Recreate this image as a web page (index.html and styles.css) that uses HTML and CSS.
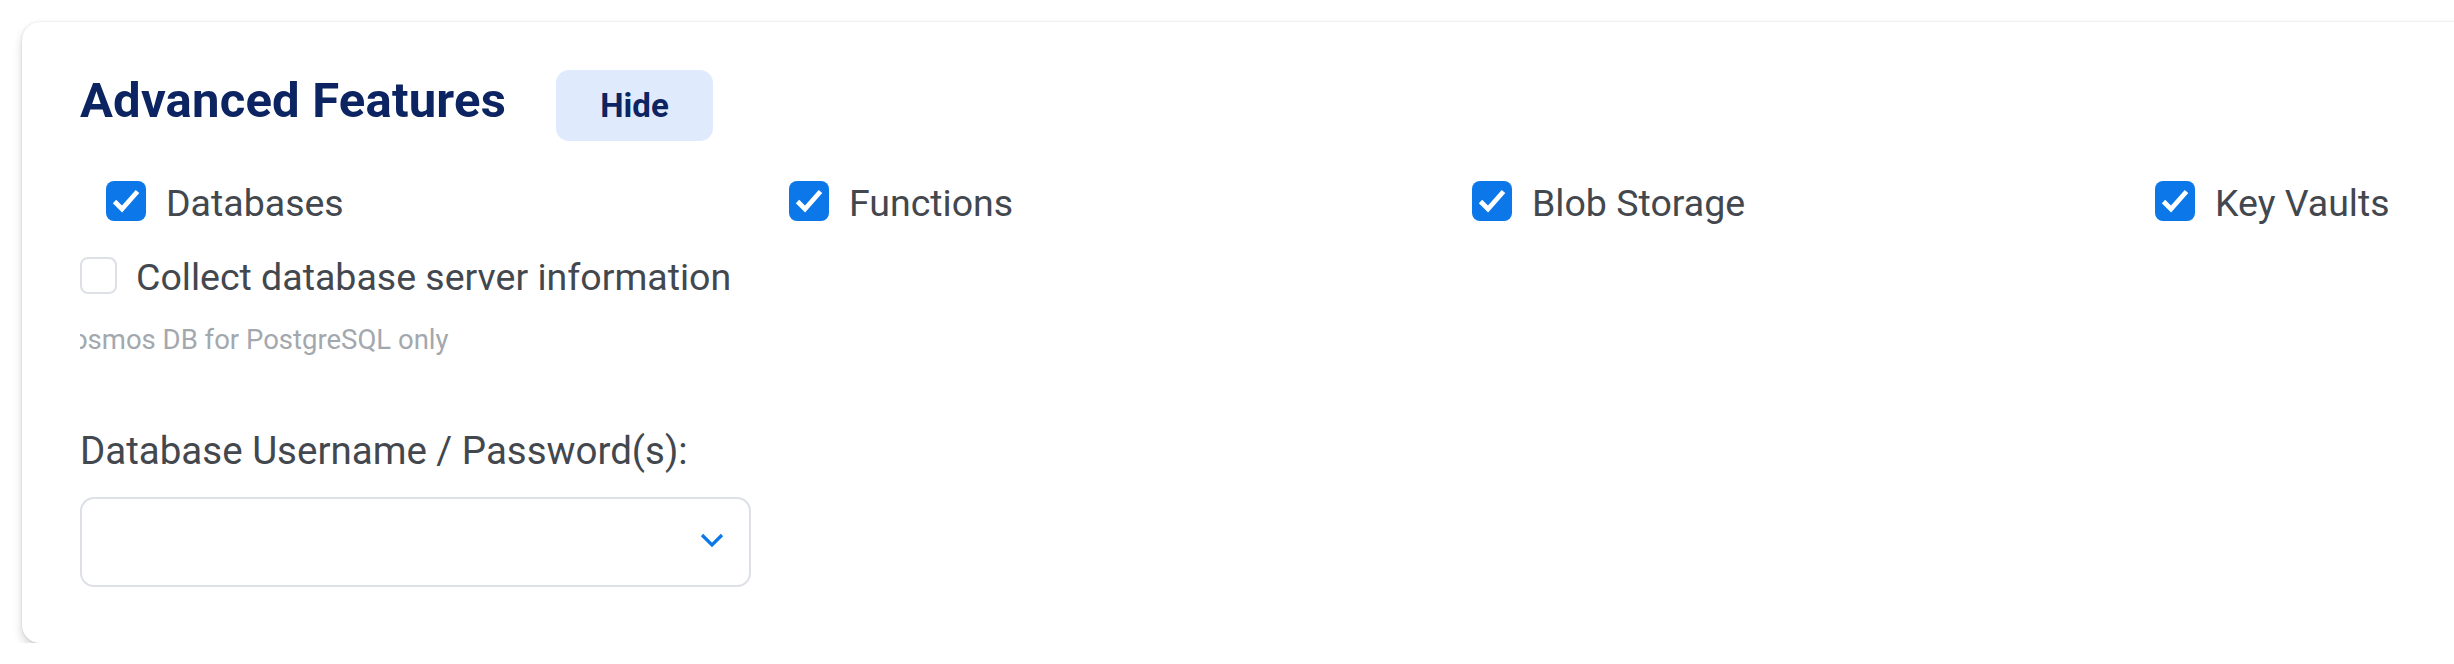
FILE: index.html
```html
<!DOCTYPE html>
<html lang="en">
<head>
<meta charset="utf-8">
<title>Advanced Features</title>
<link rel="stylesheet" href="styles.css">
</head>
<body>
<div class="page">
  <section class="card">
    <div class="header">
      <h2 class="title">Advanced Features</h2>
      <button class="hide-btn" type="button">Hide</button>
    </div>

    <div class="features">
      <label class="check-item">
        <span class="box checked"><svg viewBox="0 0 40 40" width="40" height="40"><path d="M8.5 20.5 L16 28 L31.5 10.5" fill="none" stroke="#fff" stroke-width="4.8"/></svg></span>
        <span class="check-label">Databases</span>
      </label>
      <label class="check-item">
        <span class="box checked"><svg viewBox="0 0 40 40" width="40" height="40"><path d="M8.5 20.5 L16 28 L31.5 10.5" fill="none" stroke="#fff" stroke-width="4.8"/></svg></span>
        <span class="check-label">Functions</span>
      </label>
      <label class="check-item">
        <span class="box checked"><svg viewBox="0 0 40 40" width="40" height="40"><path d="M8.5 20.5 L16 28 L31.5 10.5" fill="none" stroke="#fff" stroke-width="4.8"/></svg></span>
        <span class="check-label">Blob Storage</span>
      </label>
      <label class="check-item">
        <span class="box checked"><svg viewBox="0 0 40 40" width="40" height="40"><path d="M8.5 20.5 L16 28 L31.5 10.5" fill="none" stroke="#fff" stroke-width="4.8"/></svg></span>
        <span class="check-label">Key Vaults</span>
      </label>
    </div>

    <label class="check-item collect">
      <span class="box empty"></span>
      <span class="check-label">Collect database server information</span>
    </label>

    <div class="helper"><span class="helper-text">Cosmos DB for PostgreSQL only</span></div>

    <div class="field-label">Database Username / Password(s):</div>
    <div class="select">
      <svg class="chevron" viewBox="0 0 24 15" width="24" height="15"><path d="M2 2 L12 12 L22 2" fill="none" stroke="#0b77e8" stroke-width="3.2"/></svg>
    </div>
  </section>
</div>
</body>
</html>
```

FILE: styles.css
```css
html, body {
  margin: 0;
  padding: 0;
  background: #ffffff;
  overflow: hidden;
}

body {
  font-family: Roboto, "Liberation Sans", Arial, sans-serif;
  color: #43474e;
}

.page {
  padding: 22px 0 0 22px;
}

.card {
  width: 2880px;
  box-sizing: border-box;
  padding: 48px 0 56px 58px;
  background: #ffffff;
  border-radius: 18px;
  box-shadow: 0 0 2px rgba(0, 0, 0, 0.14), 0 5px 10px rgba(0, 0, 0, 0.18);
}

.header {
  display: flex;
  align-items: baseline;
  gap: 50px;
}

.title {
  margin: 0;
  font-size: 49px;
  font-weight: 700;
  line-height: 1;
  color: #0c2461;
  letter-spacing: 0.2px;
}

.hide-btn {
  width: 157px;
  height: 71px;
  border: 0;
  border-radius: 13px;
  background: #e0eafd;
  color: #0c2461;
  font-family: Roboto, "Liberation Sans", Arial, sans-serif;
  font-size: 33px;
  font-weight: 700;
  padding: 0;
}

.features {
  display: grid;
  grid-template-columns: repeat(4, 683px);
  margin: 40px 0 0 26px;
}

.check-item {
  display: flex;
  align-items: center;
  gap: 20px;
  height: 40px;
  font-size: 37.5px;
  color: #43474e;
}

.check-label {
  line-height: 36px;
  padding-top: 4px;
}

.box {
  display: block;
  flex: none;
  box-sizing: border-box;
}

.box svg {
  display: block;
}

.box.checked {
  width: 40px;
  height: 40px;
  border-radius: 8px;
  background: #0b77e8;
}

.box.empty {
  width: 37px;
  height: 37px;
  border: 2px solid #dde1e6;
  border-radius: 8px;
  background: #ffffff;
}

.collect {
  margin-top: 34px;
  gap: 19px;
}

.helper {
  margin-top: 30px;
  width: 700px;
  overflow: hidden;
  white-space: nowrap;
  font-size: 27.5px;
  line-height: 30px;
  color: #a3a8ae;
}

.helper-text {
  display: inline-block;
  margin-left: -26px;
}

.field-label {
  margin-top: 74px;
  font-size: 38.5px;
  line-height: 43px;
  color: #43474e;
}

.select {
  margin-top: 25px;
  width: 671px;
  height: 90px;
  box-sizing: border-box;
  border: 2px solid #dde1e6;
  border-radius: 14px;
  display: flex;
  align-items: center;
  justify-content: flex-end;
  padding-right: 25px;
}

.chevron {
  display: block;
  margin-top: -4px;
}
```
